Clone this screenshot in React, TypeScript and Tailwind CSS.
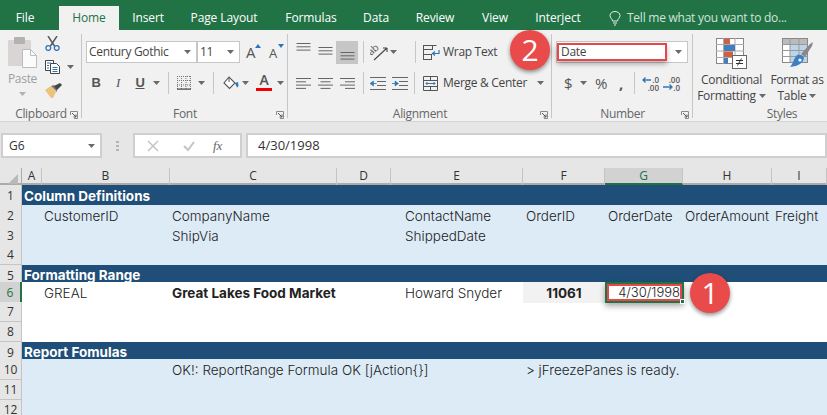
import React from 'react';

const uiFont = { fontFamily: '"Open Sans", "Noto Sans", sans-serif' };

const Caret = ({ color = '#6a6a6a', className = '' }: { color?: string; className?: string }) => (
    <svg width="7" height="4" viewBox="0 0 7 4" className={`shrink-0 ${className}`}><path d="M0 0h7L3.5 4z" fill={color} /></svg>
);

const Lines = ({ widths, aligned }: { widths: number[]; aligned: 'l' | 'c' | 'r' }) => (
    <svg width="15" height="11" viewBox="0 0 15 11">
        {widths.map((w, i) => {
            const x = aligned === 'l' ? 0 : aligned === 'c' ? (15 - w) / 2 : 15 - w;
            return <rect key={i} x={x} y={i * 3.3} width={w} height="1" fill="#666" />;
        })}
    </svg>
);

const Launcher = () => (
    <svg width="8" height="8" viewBox="0 0 8 8" className="absolute right-[4px] top-[5px]" fill="none">
        <path d="M.5 4V.5H7.5V7.5H4" stroke="#8a8a8a" />
        <path d="M2 2l4 4M3.500 6H6V3.500" stroke="#555" />
    </svg>
);

const Group = ({ label, width, children }: { label: string; width: string; children: React.ReactNode }) => (
    <div className={`${width} shrink-0 relative flex flex-col`}>
        <div className="absolute right-0 top-0 w-px h-[84px] bg-[#c6c6c6]" />
        <div className="h-[72px] shrink-0 relative">{children}</div>
        <div className="relative h-[16px] shrink-0 text-center text-[12px] leading-[16px] text-[#666]">
            {label}
            <Launcher />
        </div>
    </div>
);

const Sep = ({ className = '' }: { className?: string }) => <div className={`w-px h-[22px] bg-[#c6c6c6] shrink-0 ${className}`} />;

const PasteIcon = () => (
    <svg width="30" height="31" viewBox="0 0 30 31">
        <rect x="0" y="3" width="23" height="26" rx="1" fill="#d9d5d5" />
        <rect x="6" y="0" width="11" height="7" rx="1" fill="#b5b1b1" />
        <path d="M14.500 12.500h8l6 6v12h-14z" fill="#fbfbfb" stroke="#bcbcbc" />
        <path d="M22.500 12.500v6h6" fill="none" stroke="#bcbcbc" />
    </svg>
);

const Scissors = () => (
    <svg width="15" height="15" viewBox="0 0 15 15" fill="none">
        <path d="M3 0l6.500 10M12 0L5.500 10" stroke="#555" strokeWidth="1.400" />
        <circle cx="3.300" cy="12" r="2.400" stroke="#2f75b5" strokeWidth="1.300" />
        <circle cx="11.700" cy="12" r="2.400" stroke="#2f75b5" strokeWidth="1.300" />
    </svg>
);

const CopyIcon = () => (
    <svg width="16" height="14" viewBox="0 0 16 14" fill="none" stroke="#444">
        <path d="M.5.5h8v10h-8z" fill="#fff" />
        <path d="M5.500 3.500h6l3 3v7h-9z" fill="#fff" />
        <path d="M2 3h4M2 5.500h2M2 8h2M7.500 7.500h5M7.500 9.500h5M7.500 11.500h5" stroke="#2f75b5" />
    </svg>
);

const BrushIcon = () => (
    <svg width="17" height="15" viewBox="0 0 17 15">
        <path d="M0 7l6-4 5 6-3 6H6z" fill="#edc27a" />
        <path d="M6 3l3-1 3 4 0 3z" fill="#777" />
        <path d="M9 3l6-3 2 2-5 5z" fill="#444" />
    </svg>
);

const BigA = ({ up }: { up: boolean }) => (
    <div className="relative w-[15px] h-[18px] leading-[18px] text-[#555]">
        <span className={up ? 'text-[15px]' : 'text-[13px]'}>A</span>
        <svg width="6" height="4" viewBox="0 0 6 4" className="absolute right-0 top-[1px]">
            <path d={up ? 'M0 4h6L3 0z' : 'M0 0h6L3 4z'} fill="#2f75b5" />
        </svg>
    </div>
);

const BordersIcon = () => (
    <svg width="14" height="14" viewBox="0 0 14 14">
        <path d="M.5 0v13M4.500 0v13M9 0v13M13.500 0v13M0 .5h14M0 4.500h14M0 9h14" stroke="#777" strokeDasharray="1 1" fill="none" />
        <rect x="0" y="12.500" width="14" height="1.200" fill="#444" />
    </svg>
);

const FillIcon = () => (
    <svg width="16" height="14" viewBox="0 0 16 14" fill="none">
        <path d="M6 1L1 7l5.500 5.500L12 7z" stroke="#555" strokeWidth="1.100" fill="#fff" />
        <path d="M6 1V6" stroke="#555" />
        <path d="M12 7l3-1 .5 4-1.500 1.500z" fill="#2f75b5" />
    </svg>
);

const OrientIcon = () => (
    <svg width="19" height="18" viewBox="0 0 19 18" fill="none">
        <text x="0" y="0" fontSize="10" fill="#555" transform="translate(1 13) rotate(-42)" fontFamily="Open Sans">ab</text>
        <path d="M4 17L17 5M17 5h-4M17 5v4" stroke="#444" strokeWidth="1.100" />
    </svg>
);

const Indent = ({ flip }: { flip?: boolean }) => (
    <svg width="16" height="13" viewBox="0 0 16 13">
        <path d="M0 .5h16M7 4.500h9M7 8.500h9M0 12.500h16" stroke="#666" />
        <path d={flip ? 'M0 6.500h3V4l3.500 2.500L3 9V6.500z' : 'M6.500 6.500h-3V4L0 6.500 3.500 9V6.500z'} fill="#2f75b5" stroke="#2f75b5" strokeWidth=".6" />
    </svg>
);

const WrapIcon = () => (
    <svg width="17" height="15" viewBox="0 0 17 15" fill="none" stroke="#555">
        <path d="M.5.5h13M.5 4.500h9M.5 9.500h8M.5 14.500h8M.5 0v15M9.500 0v5M8.500 9v6" />
        <path d="M16 5v3.500H9.500M12 6.500l-2.500 2 2.500 2" stroke="#2f75b5" strokeWidth="1.200" />
    </svg>
);

const MergeIcon = () => (
    <svg width="15" height="15" viewBox="0 0 15 15" fill="none" stroke="#555">
        <path d="M.5.5h14v14H.5zM.5 4.500h14M.5 10.500h14M7.500.5v4M7.500 10.500v4" />
        <path d="M3 7.500h9M4.500 6L3 7.500 4.500 9M10.500 6L12 7.500 10.500 9" stroke="#2f75b5" />
    </svg>
);

const Decimal = ({ more }: { more?: boolean }) => (
    <div className="relative w-[17px] h-[15px] text-[8px] leading-[7px] text-[#555] font-semibold tracking-normal">
        <div className="text-right h-[7px]">{more ? '.00' : '.0'}</div>
        <div className="text-right h-[7px] mt-[1px]">{more ? '.0' : '.00'}</div>
        <svg width="10" height="6" viewBox="0 0 10 6" className={`absolute left-0 ${more ? 'bottom-[1px]' : 'top-[1px]'}`} fill="none" stroke="#2f75b5" strokeWidth="1.300">
            {more ? <path d="M0 3h9M6.500 .5L9 3 6.500 5.500" /> : <path d="M9 3H1M3.500 .5L1 3l2.500 2.500" />}
        </svg>
    </div>
);

const CondFormatIcon = () => (
    <svg width="31" height="31" viewBox="0 0 31 31">
        <rect x=".5" y=".5" width="27" height="25" fill="#fff" stroke="#888" />
        <path d="M7.500 0v26M19 0v26M0 6.500h28M0 13h28M0 19.500h28" stroke="#aaa" />
        <rect x="8" y="1" width="6" height="5" fill="#d2603f" />
        <rect x="8" y="7" width="11" height="6" fill="#3f7fbf" />
        <rect x="8" y="13.500" width="9" height="5.500" fill="#d2603f" />
        <rect x="8" y="20" width="4" height="5.500" fill="#3f7fbf" />
        <rect x="16.500" y="17.500" width="14" height="13" fill="#fff" stroke="#666" />
        <path d="M20 22.500h7M20 25.500h7M25.500 20.500l-4 7" stroke="#333" fill="none" />
    </svg>
);

const TableFormatIcon = () => (
    <svg width="31" height="31" viewBox="0 0 31 31">
        <rect x=".5" y=".5" width="25" height="24" fill="#fff" stroke="#888" />
        <rect x="1" y="1" width="24" height="5" fill="#bbb" />
        <rect x="8" y="7" width="17" height="17" fill="#bcd4ea" />
        <path d="M8 0v25M17 0v25M0 6.500h26M0 12.500h26M0 18.500h26" stroke="#999" />
        <path d="M28 6l3-2-1 4-7 11-4-3z" fill="#888" />
        <path d="M15 17c3-1 6 0 7 3-1 5-5 8-14 9 3-3 4-9 7-12z" fill="#3f7fbf" />
        <circle cx="18" cy="22" r="1.600" fill="#fff" />
    </svg>
);

const Combo = ({ text, width, pad }: { text: string; width: string; pad: string }) => (
    <div className={`${width} ${pad} h-[22px] bg-white border border-[#c6c6c6] flex items-center justify-between pr-[5px] text-[12px] text-[#444] shrink-0`}>
        <span>{text}</span>
        <Caret />
    </div>
);

const Ribbon = () => (
    <div className="h-[92px] bg-[#f1f1f1] border-b border-[#d4d4d4] pt-[4px] flex tracking-[-0.3px]" style={uiFont}>
        <Group label="Clipboard" width="w-[82px]">
            <div className="flex">
                <div className="w-[44px] flex flex-col items-center pl-[1px] pt-[3px]">
                    <PasteIcon />
                    <div className="text-[12px] leading-[16px] mt-[3px] text-[#a0a0a0]">Paste</div>
                    <Caret color="#b0b0b0" className="mt-[5px]" />
                </div>
                <div className="flex flex-col pt-[2px] pl-[1px]">
                    <Scissors />
                    <div className="flex items-center mt-[9px] gap-[6px]"><CopyIcon /><Caret /></div>
                    <div className="mt-[9px]"><BrushIcon /></div>
                </div>
            </div>
        </Group>
        <Group label="Font" width="w-[206px]">
            <div className="flex items-center pl-[4px] pt-[7px] h-[29px]">
                <Combo text="Century Gothic" width="w-[111px]" pad="pl-[2px]" />
                <Combo text="11" width="w-[43px]" pad="pl-[2px]" />
                <div className="flex gap-[8px] ml-[6px]"><BigA up /><BigA up={false} /></div>
            </div>
            <div className="flex items-center h-[22px] mt-[9px] pl-[8px] text-[#555]">
                <span className="w-[12px] text-center font-bold text-[13px]" style={{ fontFamily: '"Liberation Sans", sans-serif' }}>B</span>
                <span className="w-[12px] ml-[10px] text-center italic text-[13px]" style={{ fontFamily: '"Liberation Serif", serif' }}>I</span>
                <span className="w-[12px] ml-[10px] text-center underline text-[13px] font-semibold" style={{ fontFamily: '"Liberation Sans", sans-serif' }}>U</span>
                <Caret className="ml-[7px]" />
                <Sep className="ml-[8px]" />
                <div className="ml-[8px]"><BordersIcon /></div>
                <Caret className="ml-[7px]" />
                <Sep className="ml-[8px]" />
                <div className="ml-[9px]"><FillIcon /></div>
                <Caret className="ml-[3px]" />
                <div className="ml-[7px] flex flex-col items-center w-[16px] h-[22px]">
                    <span className="text-[14px] leading-[16px] text-[#555] font-semibold">A</span>
                    <div className="w-[16px] h-[3px] bg-[#f00000]" />
                </div>
                <Caret className="ml-[5px]" />
            </div>
        </Group>
        <Group label="Alignment" width="w-[264px]">
            <div className="flex items-center pl-[8px] pt-[7px] h-[29px]">
                <div className="w-[15px] h-[22px] pt-[2px]"><Lines widths={[14, 14, 14]} aligned="c" /></div>
                <div className="w-[15px] ml-[7px] h-[22px] pt-[6px]"><Lines widths={[14, 14, 14]} aligned="c" /></div>
                <div className="w-[22px] ml-[3px] h-[23px] bg-[#c6c6c6] flex items-end justify-center pb-[1px]"><Lines widths={[14, 14, 14]} aligned="c" /></div>
                <Sep className="ml-[5px]" />
                <div className="ml-[6px]"><OrientIcon /></div>
                <Caret className="ml-[1px]" />
                <Sep className="ml-[18px]" />
                <div className="ml-[7px]"><WrapIcon /></div>
                <span className="ml-[3px] text-[12px] text-[#444]">Wrap Text</span>
            </div>
            <div className="flex items-center h-[22px] mt-[9px] pl-[8px]">
                <Lines widths={[15, 10, 15, 10]} aligned="l" />
                <div className="ml-[7px]"><Lines widths={[15, 10, 15, 10]} aligned="c" /></div>
                <div className="ml-[7px]"><Lines widths={[15, 10, 15, 10]} aligned="r" /></div>
                <Sep className="ml-[8px]" />
                <div className="ml-[6px]"><Indent /></div>
                <div className="ml-[6px]"><Indent flip /></div>
                <Sep className="ml-[6px]" />
                <div className="ml-[8px]"><MergeIcon /></div>
                <span className="ml-[5px] text-[12px] text-[#444] whitespace-nowrap">Merge &amp; Center</span>
                <Caret className="ml-[10px]" />
            </div>
        </Group>
        <Group label="Number" width="w-[141px]">
            <div className="pl-[4px] pt-[7px] h-[29px]">
                <Combo text="Date" width="w-[132px]" pad="pl-[4px]" />
            </div>
            <div className="flex items-center h-[22px] mt-[9px] pl-[12px] text-[#555]">
                <span className="text-[15px] w-[10px]">$</span>
                <Caret className="ml-[6px]" />
                <span className="text-[15px] ml-[8px] w-[16px]">%</span>
                <span className="text-[15px] ml-[8px] w-[6px] font-bold">,</span>
                <Sep className="ml-[9px]" />
                <div className="ml-[7px]"><Decimal /></div>
                <div className="ml-[4px]"><Decimal more /></div>
            </div>
        </Group>
        <div className="flex-1 flex flex-col">
            <div className="h-[72px] shrink-0 flex pl-[2px] text-[12px] leading-[16px] text-[#444] text-center">
                <div className="w-[73px] flex flex-col items-center pt-[4px]">
                    <CondFormatIcon />
                    <div className="mt-[3px]">Conditional</div>
                    <div className="flex items-center gap-[3px]">Formatting <Caret /></div>
                </div>
                <div className="w-[58px] flex flex-col items-center pt-[4px]">
                    <TableFormatIcon />
                    <div className="mt-[3px] whitespace-nowrap">Format as</div>
                    <div className="flex items-center gap-[3px]">Table <Caret /></div>
                </div>
            </div>
            <div className="h-[16px] shrink-0 w-[178px] text-center text-[12px] leading-[16px] text-[#666]">Styles</div>
        </div>
    </div>
);

const tabs = [
    { name: 'File', w: 'w-[50px]' },
    { name: 'Home', w: 'w-[60px] ml-[9px]', active: true },
    { name: 'Insert', w: 'w-[58px]' },
    { name: 'Page Layout', w: 'w-[94px]' },
    { name: 'Formulas', w: 'w-[80px]' },
    { name: 'Data', w: 'w-[50px]' },
    { name: 'Review', w: 'w-[68px]' },
    { name: 'View', w: 'w-[52px]' },
    { name: 'Interject', w: 'w-[74px]' },
];

const TabBar = () => (
    <div className="h-[30px] bg-[#217346] flex items-end text-[12px] text-white tracking-[-0.1px]" style={uiFont}>
        {tabs.map((t) => (
            <div key={t.name} className={`${t.w} h-[24px] leading-[24px] text-center ${t.active ? 'bg-[#f1f1f1] text-[#217346]' : ''}`}>{t.name}</div>
        ))}
        <div className="h-[24px] flex items-center ml-[14px] text-[#d3e3da]">
            <svg width="12" height="15" viewBox="0 0 12 15" fill="none" stroke="#e3efe8">
                <path d="M3.500 10C3.500 8 1 7 1 4.500a5 4 0 0 1 10 0C11 7 8.500 8 8.500 10zM4 12h4M5 14h2" />
            </svg>
            <span className="ml-[6px] tracking-[-0.25px]">Tell me what you want to do...</span>
        </div>
    </div>
);

const FormulaBar = () => (
    <div className="h-[46px] bg-[#e6e6e6] flex pt-[11px] text-[12px] text-[#333]" style={uiFont}>
        <div className="ml-[1px] w-[101px] h-[25px] bg-white border-2 border-[#cfcfcf] flex items-center justify-between pl-[6px] pr-[5px]">
            <span>G6</span>
            <Caret />
        </div>
        <div className="w-[31px] flex flex-col items-center justify-center gap-[2px] h-[25px]">
            {[0, 1, 2].map((i) => <div key={i} className="w-[3px] h-[2px] bg-[#b4b4b4]" />)}
        </div>
        <div className="w-[109px] h-[25px] bg-white border-2 border-[#cfcfcf] flex items-center pl-[12px]">
            <svg width="12" height="12" viewBox="0 0 12 12" stroke="#c4c4c4" strokeWidth="1.500" fill="none"><path d="M1 1l10 10M11 1L1 11" /></svg>
            <svg width="12" height="12" viewBox="0 0 12 12" stroke="#c4c4c4" strokeWidth="2" fill="none" className="ml-[24px]"><path d="M1 6l4 4 6-8" /></svg>
            <span className="ml-[18px] text-[13px] italic text-[#666]" style={{ fontFamily: '"Liberation Serif", serif' }}>fx</span>
        </div>
        <div className="ml-[4px] flex-1 h-[25px] bg-white border-2 border-[#cfcfcf] flex items-center pl-[10px] text-[13px]">4/30/1998</div>
    </div>
);

const colClass = 'grid grid-cols-[22px_20px_128px_167px_54px_132px_82px_78px_89px_1fr]';
const colNames = ['A', 'B', 'C', 'D', 'E', 'F', 'G', 'H', 'I'];

type Cell = { col: number; text: string; className?: string };
type Row = { n: number; h: string; kind: 'head' | 'blue' | 'white'; cells: Cell[] };

const rows: Row[] = [
    { n: 1, h: 'h-[20px]', kind: 'head', cells: [{ col: 1, text: 'Column Definitions', className: 'pl-[2px] pt-[1px]' }] },
    { n: 2, h: 'h-[20px]', kind: 'blue', cells: [
        { col: 2, text: 'CustomerID', className: 'pl-[2px]' },
        { col: 3, text: 'CompanyName', className: 'pl-[2px]' },
        { col: 5, text: 'ContactName', className: 'pl-[14px]' },
        { col: 6, text: 'OrderID', className: 'pl-[3px]' },
        { col: 7, text: 'OrderDate', className: 'pl-[3px]' },
        { col: 8, text: 'OrderAmount', className: 'pl-[2px]' },
        { col: 9, text: 'Freight', className: 'pl-[3px]' },
    ] },
    { n: 3, h: 'h-[20px]', kind: 'blue', cells: [
        { col: 3, text: 'ShipVia', className: 'pl-[2px]' },
        { col: 5, text: 'ShippedDate', className: 'pl-[14px]' },
    ] },
    { n: 4, h: 'h-[20px]', kind: 'blue', cells: [] },
    { n: 5, h: 'h-[17px]', kind: 'head', cells: [{ col: 1, text: 'Formatting Range', className: 'pl-[2px] pb-[2px]' }] },
    { n: 6, h: 'h-[20px]', kind: 'white', cells: [
        { col: 2, text: 'GREAL', className: 'pl-[2px]' },
        { col: 3, text: 'Great Lakes Food Market', className: 'pl-[2px] font-bold' },
        { col: 5, text: 'Howard Snyder', className: 'pl-[14px]' },
        { col: 6, text: '11061', className: 'bg-[#f2f2f2] font-bold justify-center' },
    ] },
    { n: 7, h: 'h-[20px]', kind: 'white', cells: [] },
    { n: 8, h: 'h-[20px]', kind: 'white', cells: [] },
    { n: 9, h: 'h-[17px]', kind: 'head', cells: [{ col: 1, text: 'Report Fomulas', className: 'pl-[2px] pb-[2px]' }] },
    { n: 10, h: 'h-[21px]', kind: 'blue', cells: [
        { col: 3, text: 'OK!: ReportRange Formula OK [jAction{}]', className: 'pl-[2px]' },
        { col: 6, text: '> jFreezePanes is ready.', className: 'pl-[3px]' },
    ] },
    { n: 11, h: 'h-[20px]', kind: 'blue', cells: [] },
    { n: 12, h: 'h-[20px]', kind: 'blue', cells: [] },
];

const cellFont = { fontFamily: 'Inter, "Open Sans", sans-serif' };

const Badge = ({ text, className }: { text: string; className: string }) => (
    <div className={`absolute ${className} w-[40px] h-[40px] rounded-full bg-[#e94b4b] shadow-[0_2px_4px_rgba(0,0,0,0.45)] flex items-center justify-center text-white text-[30px] leading-none`} style={{ fontFamily: '"Open Sans", sans-serif' }}>
        {text}
    </div>
);

const Sheet = () => (
    <div className="relative" style={cellFont}>
        <div className={`${colClass} h-[17px] bg-[#e6e6e6] border-b-2 border-[#ababab] text-[12px] leading-[16px] text-[#333]`} style={uiFont}>
            <div className="relative border-r border-[#ababab]">
                <svg width="10" height="10" viewBox="0 0 10 10" className="absolute right-[3px] bottom-[1px]"><path d="M10 0v10H0z" fill="#b9b9b9" /></svg>
            </div>
            {colNames.map((c) => (
                <div key={c} className={`text-center border-r border-[#c4c4c4] h-[17px] ${c === 'G' ? 'bg-[#d2d2d2] text-[#217346] border-b-2 border-b-[#217346]' : ''}`}>{c}</div>
            ))}
            <div />
        </div>
        {rows.map((r) => (
            <div key={r.n} className={`${colClass} ${r.h} text-[13.500px] font-light ${r.kind === 'head' ? 'bg-[#1f4e78] text-white' : r.kind === 'blue' ? 'bg-[#ddebf7] text-[#222]' : 'bg-white text-[#222]'}`}>
                <div
                    className={`flex items-center justify-center border-b border-r border-[#c4c4c4] text-[12px] font-normal pt-[1px] ${r.n === 6 ? 'bg-[#d2d2d2] text-[#217346] border-r-2 border-r-[#217346]' : 'bg-[#e6e6e6] text-[#333]'}`}
                    style={uiFont}
                >
                    {r.n}
                </div>
                {colNames.map((_, i) => {
                    const cell = r.cells.find((c) => c.col === i + 1);
                    return (
                        <div key={i} className={`whitespace-nowrap flex items-center ${r.kind === 'head' ? 'font-bold' : 'pt-[1px]'} ${cell?.className ?? ''}`}>
                            {cell?.text}
                        </div>
                    );
                })}
            </div>
        ))}
        {/* selected cell and callout lie over the grid */}
        <div className="absolute left-[605px] top-[114px] w-[79px] h-[21px] border-2 border-[#217346] bg-white shadow-[0_3px_6px_rgba(0,0,0,0.35)] flex items-center justify-end pr-[2px] text-[13px] font-light text-[#222]">
            <div className="absolute inset-0 border-2 border-[#e8474a]" />
            4/30/1998
            <div className="absolute right-[-3px] bottom-[-3px] w-[5px] h-[5px] bg-[#217346] border border-white" />
        </div>
        <Badge text="1" className="left-[690px] top-[105px]" />
    </div>
);

export default function App() {
    return (
        <div className="relative w-[827px] h-[415px] overflow-hidden bg-white">
            <TabBar />
            <Ribbon />
            <FormulaBar />
            <Sheet />
            <Badge text="2" className="left-[510px] top-[30px]" />
            <div className="absolute left-[557px] top-[43px] w-[110px] h-[18px] border-2 border-[#e8474a] shadow-[0_3px_5px_rgba(0,0,0,0.3)]" />
        </div>
    );
}
